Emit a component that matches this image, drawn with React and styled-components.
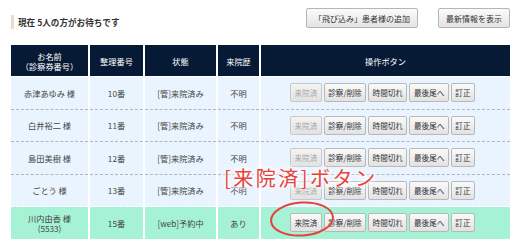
import React from 'react';
import styled, { createGlobalStyle } from 'styled-components';

const ROWS = [
  { id: 1, name: '赤津あゆみ 様', no: '10番', status: '[管]来院済み', history: '不明', arrived: true },
  { id: 2, name: '白井裕二 様', no: '11番', status: '[管]来院済み', history: '不明', arrived: true },
  { id: 3, name: '島田美樹 様', no: '12番', status: '[管]来院済み', history: '不明', arrived: true },
  { id: 4, name: 'ごとう 様', no: '13番', status: '[管]来院済み', history: '不明', arrived: true },
  { id: 5, name: '川内由香 様', card: '(5533)', no: '15番', status: '[web]予約中', history: 'あり', arrived: false, web: true },
];

const ACTIONS = ['診察/削除', '時間切れ', '最後尾へ', '訂正'];

export default function App() {
  return (
    <Page>
      <GlobalStyle />
      <TopBar>
        <Title>現在 5人の方がお待ちです</Title>
        <TopButtons>
          <TopButton>「飛び込み」患者様の追加</TopButton>
          <TopButton>最新情報を表示</TopButton>
        </TopButtons>
      </TopBar>

      <Table>
        <thead>
          <tr>
            <Th width={77}>
              お名前
              <br />
              （診察券番号）
            </Th>
            <Th width={53}>整理番号</Th>
            <Th width={71}>状態</Th>
            <Th width={41}>来院歴</Th>
            <Th>操作ボタン</Th>
          </tr>
        </thead>
        <tbody>
          {ROWS.map(row => (
            <Row key={row.id} web={row.web}>
              <Td>
                {row.name}
                {row.card && (
                  <>
                    <br />
                    {row.card}
                  </>
                )}
              </Td>
              <Td>{row.no}</Td>
              <Td>{row.status}</Td>
              <Td>{row.history}</Td>
              <Td>
                <Actions>
                  <ActionButton disabled={row.arrived}>来院済</ActionButton>
                  {ACTIONS.map(label => (
                    <ActionButton key={label}>{label}</ActionButton>
                  ))}
                </Actions>
              </Td>
            </Row>
          ))}
        </tbody>
      </Table>

      <Note>[来院済]ボタン</Note>
      <Circle width="66" height="38" viewBox="0 0 66 38">
        <ellipse cx="33" cy="19" rx="31" ry="16.5" transform="rotate(-4 33 19)" fill="none" stroke="#e8413c" strokeWidth="2" />
      </Circle>
    </Page>
  );
}

const GlobalStyle = createGlobalStyle`
  body {
    margin: 0;
    background: #fff;
    font-family: "Noto Sans CJK JP", "Noto Sans", sans-serif;
    color: #333;
  }
`;

const Page = styled.div`
  position: relative;
  width: 520px;
  height: 245px;
  padding: 8px 10px 0 11px;
  box-sizing: border-box;
`;

const TopBar = styled.div`
  display: flex;
  justify-content: space-between;
  align-items: flex-start;
  height: 29px;
`;

const Title = styled.div`
  margin-top: 7px;
  height: 14px;
  line-height: 14px;
  padding-left: 4px;
  border-left: 3px solid #eadccb;
  font-size: 8.6px;
  font-weight: bold;
  color: #333;
`;

const TopButtons = styled.div`
  display: flex;
  gap: 20px;
`;

const TopButton = styled.button`
  height: 20px;
  padding: 0 7px;
  font-family: inherit;
  font-size: 8px;
  color: #333;
  background: linear-gradient(#fbfbfb, #e4e4e4);
  border: 1px solid #b5b5b5;
  border-radius: 2px;
`;

const Table = styled.table`
  margin-top: 8px;
  width: 499px;
  border-collapse: collapse;
  table-layout: fixed;
`;

const Th = styled.th`
  width: ${props => (props.width ? `${props.width}px` : 'auto')};
  height: 31px;
  padding: 0;
  background: #071a35;
  color: #fff;
  font-size: 8.2px;
  font-weight: normal;
  line-height: 10px;
  text-align: center;
  & + & {
    border-left: 2px solid #fff;
  }
`;

const Row = styled.tr`
  background: ${props => (props.web ? '#a6f2d4' : '#eaf4fe')};
  border-top: 1px dashed ${props => (props.web ? '#fff' : '#aeb6c0')};
  thead + tbody &:first-child {
    border-top: 1px solid #fff;
  }
`;

const Td = styled.td`
  height: 31.5px;
  padding: 0;
  font-size: 8.2px;
  line-height: 10px;
  color: #444;
  text-align: center;
  & + & {
    border-left: 2px solid #fff;
  }
`;

const Actions = styled.div`
  display: flex;
  justify-content: center;
  gap: 2px;
  padding-right: 6px;
`;

const ActionButton = styled.button`
  height: 19px;
  padding: 0 3.5px;
  font-family: inherit;
  font-size: 7.6px;
  color: #333;
  background: linear-gradient(#fafafa, #e2e2e2);
  border: 1px solid #b8b8b8;
  border-radius: 2px;
  &:disabled {
    color: #a8a8a8;
    background: linear-gradient(#f4f4f4, #e2e2e2);
    border-color: #c8c8c8;
  }
`;

const Note = styled.div`
  position: absolute;
  left: 224px;
  top: 165px;
  font-size: 20px;
  line-height: 26px;
  letter-spacing: 2.5px;
  color: #e8413c;
  text-shadow: 0 0 3px #fff, 0 0 5px #fff, 0 0 8px #fff, 0 0 8px #fff;
`;

const Circle = styled.svg`
  position: absolute;
  left: 269px;
  top: 200px;
`;
